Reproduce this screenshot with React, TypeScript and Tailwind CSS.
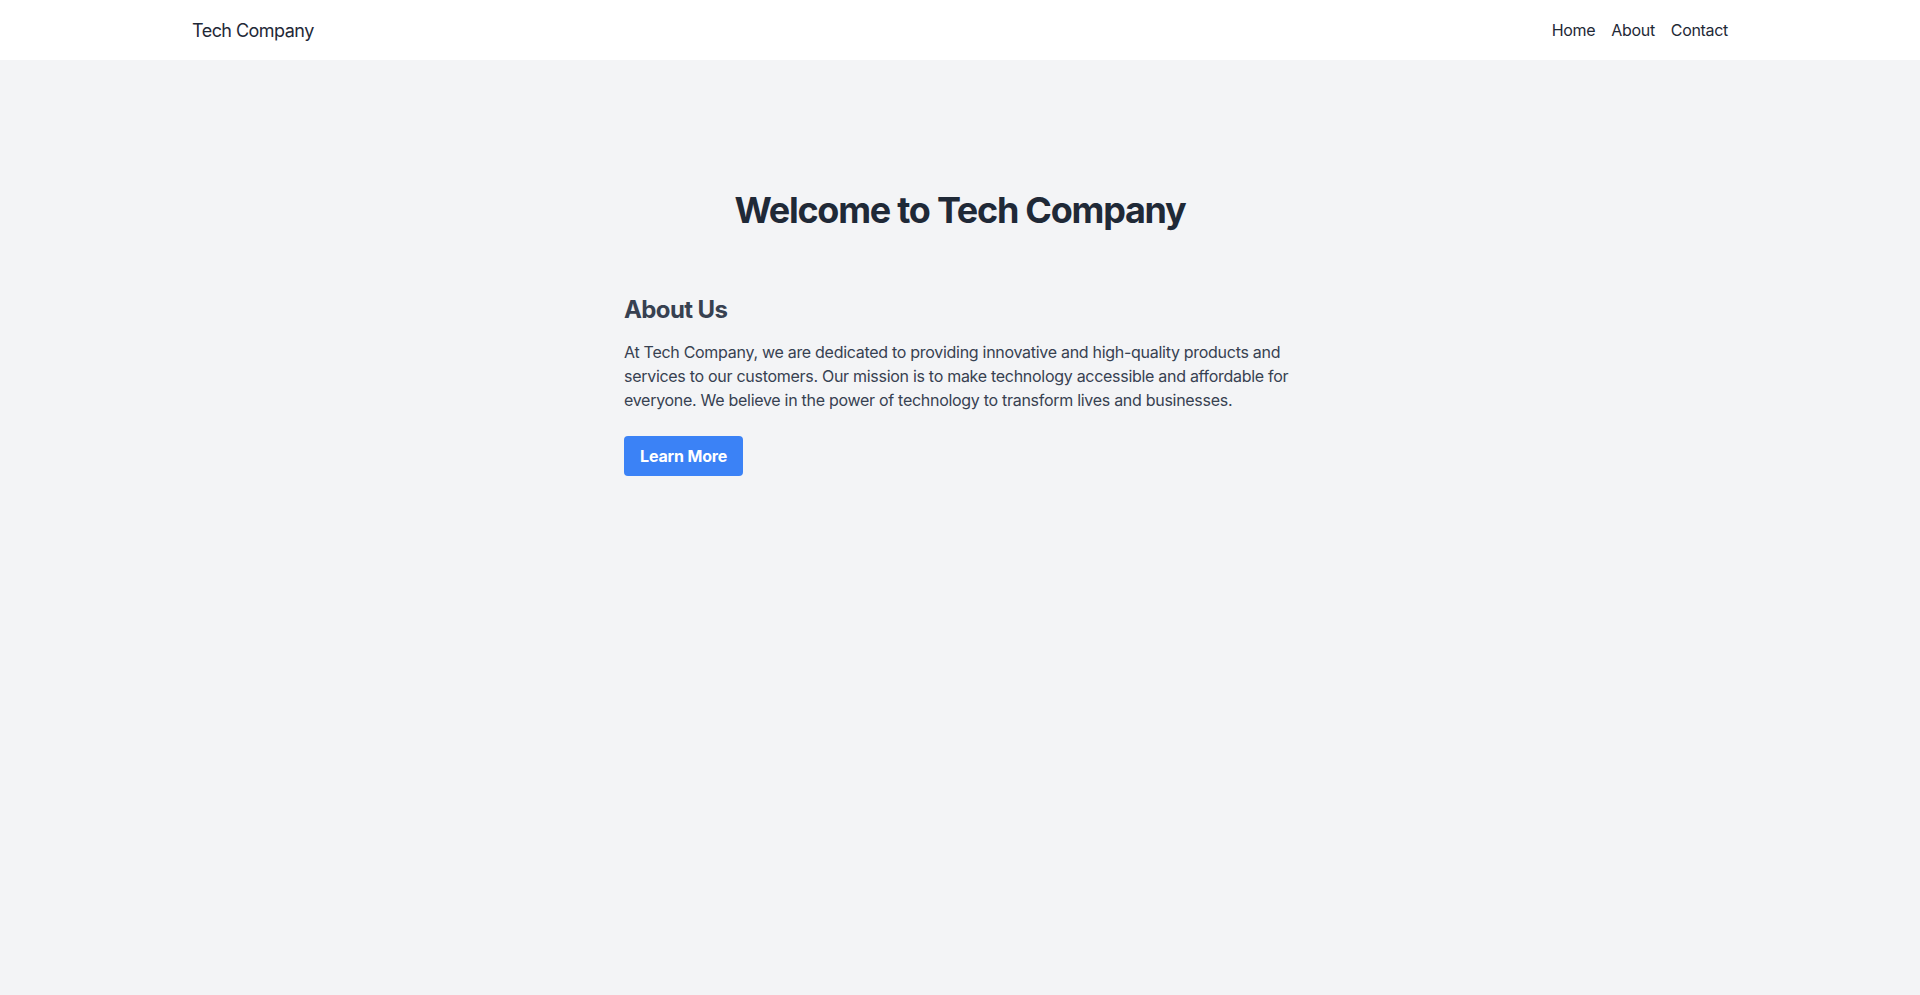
import React from "react";

export default function App() {
  return (
    <div className="min-h-screen bg-[#f3f4f6] font-['Inter',sans-serif]">
      <header className="bg-white">
        <div className="max-w-[1536px] mx-auto flex items-center justify-between py-4">
          <div className="text-lg leading-7 text-[#1f2937] tracking-[-0.03em] pt-px -mb-px">Tech Company</div>
          <nav className="flex items-center gap-4 text-base text-[#1f2937] tracking-[-0.02em]">
            <a href="#">Home</a>
            <a href="#">About</a>
            <a href="#">Contact</a>
          </nav>
        </div>
      </header>
      <main className="pt-[130px] flex flex-col items-center">
        <h1 className="text-4xl font-bold text-[#1f2937] tracking-[-0.035em] mb-16">Welcome to Tech Company</h1>
        <section className="w-full max-w-2xl">
          <h2 className="text-2xl font-bold text-[#374151] tracking-[-0.025em] mb-3.5">About Us</h2>
          <p className="text-base text-[#374151] tracking-[-0.018em]">
            At Tech Company, we are dedicated to providing innovative and high-quality products and services to our customers. Our mission is to make technology accessible and affordable for everyone. We believe in the power of technology to transform lives and businesses.
          </p>
          <button className="mt-6 bg-[#3b82f6] text-white font-bold tracking-[-0.01em] px-4 py-2 rounded">Learn More</button>
        </section>
      </main>
    </div>
  );
}
